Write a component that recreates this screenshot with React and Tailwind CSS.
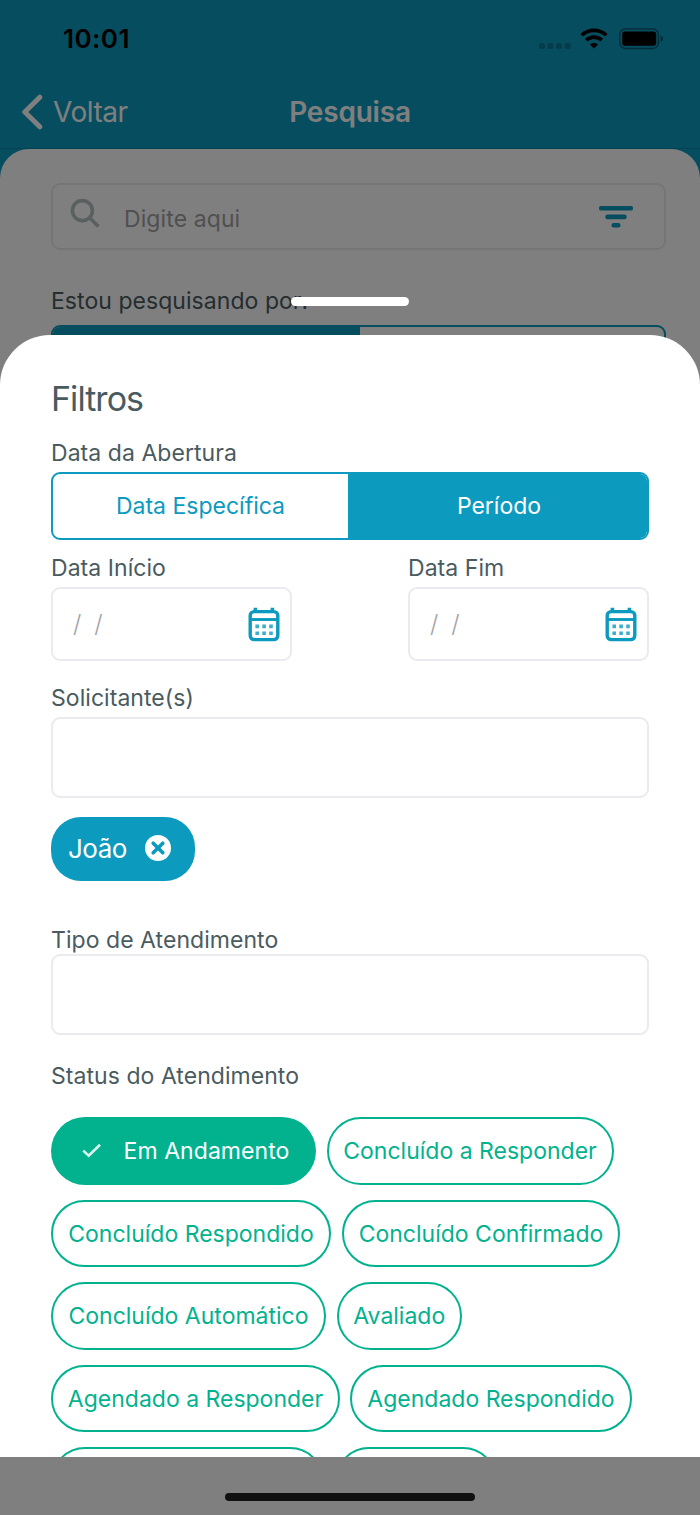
import React from "react";

const label = "text-[23px] leading-[30px] tracking-[0.05px] text-[#4a5b60]";

function StatusBar() {
  return (
    <div className="flex h-[76px] items-center justify-between pt-px pr-[36px] pl-[63px] text-black">
      <span className="text-[26px] leading-[30px] font-semibold tracking-[0.45px]">10:01</span>
      <div className="flex items-center">
        <svg className="mt-[14px] h-[6px] w-8" viewBox="0 0 32 6" fill="#000" fillOpacity="0.22">
          <rect x="0" width="6" height="6" rx="1.8" />
          <rect x="8.5" width="6" height="6" rx="1.8" />
          <rect x="17" width="6" height="6" rx="1.8" />
          <rect x="25.5" width="6" height="6" rx="1.8" />
        </svg>
        <svg className="ml-[9px] h-[21px] w-[28px]" viewBox="0 0 28 21">
          <g fill="none" stroke="#000" strokeWidth="3.7">
            <path d="M1.7 7.3A17.6 17.6 0 0 1 26.3 7.3" />
            <path d="M6.2 12.2A11.3 11.3 0 0 1 21.8 12.2" />
          </g>
          <path d="M14 20.6L9.9 16.6Q14 12.9 18.1 16.6Z" fill="#000" />
        </svg>
        <svg className="ml-[11px] h-[22px] w-[45px]" viewBox="0 0 45 22">
          <rect x="0.8" y="1" width="38.6" height="19.4" rx="5.5" fill="none" stroke="#000" strokeOpacity="0.4" strokeWidth="1.5" />
          <rect x="3.2" y="3.6" width="34" height="14.2" rx="2.8" fill="#000" />
          <path d="M41.6 7.4Q44 8.6 44 10.7T41.6 14Z" fill="#000" fillOpacity="0.5" />
        </svg>
      </div>
    </div>
  );
}

function NavBar() {
  return (
    <div className="grid h-[73px] grid-cols-3 items-center border-b border-[#0a86a8] text-[28px] text-white">
      <div className="flex items-center pl-[20px]">
        <svg className="h-[36px] w-[23px]" viewBox="0 0 23 36" fill="none" stroke="currentColor" strokeWidth="5" strokeLinecap="round" strokeLinejoin="round">
          <path d="M19.8 3.2L4.8 18L19.8 32.8" />
        </svg>
        <span className="ml-[10px] leading-[34px] tracking-[-0.5px]">Voltar</span>
      </div>
      <span className="text-center leading-[34px] font-semibold tracking-[-0.2px]">Pesquisa</span>
    </div>
  );
}

function SearchScreen() {
  return (
    <div className="flex h-full flex-col bg-[#0c9abf]">
      <StatusBar />
      <NavBar />
      <div className="flex-1 rounded-t-[29px] bg-white pt-[34px] pr-[34px] pl-[51px]">
        <div className="flex h-[67px] items-center rounded-[9px] border-2 border-[#ebebef] pr-[31px] pl-[17px]">
          <svg className="-mt-[5px] h-[32px] w-[32px]" viewBox="0 0 32 32" fill="none" stroke="#b4bfbe" strokeWidth="3.6">
            <circle cx="12.4" cy="12.6" r="10" />
            <path d="M19.4 19.6L28.4 28.6" />
          </svg>
          <span className="mt-[5px] ml-[22px] flex-1 text-[23px] leading-[30px] tracking-[0.1px] text-[#a0a0a3]">Digite aqui</span>
          <svg className="h-[22px] w-[34px]" viewBox="0 0 34 22" fill="#0c9abf">
            <rect x="0" y="0" width="34" height="4.6" rx="1.8" />
            <rect x="6.4" y="8.6" width="21.2" height="4.6" rx="1.8" />
            <rect x="12.6" y="17" width="8.8" height="4.6" rx="1.8" />
          </svg>
        </div>
        <p className={`mt-[36px] ${label}`}>Estou pesquisando por:</p>
        <div className="mt-[9px] flex h-[67px] overflow-hidden rounded-[9px] border-2 border-[#0c9abf]">
          <div className="w-[307px] bg-[#0c9abf]" />
        </div>
      </div>
    </div>
  );
}

function CalendarIcon() {
  return (
    <svg className="mt-[2px] h-[36px] w-[32px]" viewBox="0 0 32 36" fill="none" stroke="#0c9abf">
      <rect x="2.2" y="4.6" width="27.6" height="28" rx="4" strokeWidth="3.4" />
      <path d="M2 12.5H30" strokeWidth="2.9" />
      <path d="M7.4 0.8V5M24.4 0.8V5" strokeWidth="3.6" />
      <path d="M7.4 19.4H24.8M7.4 26.2H24.8" strokeWidth="3.6" strokeDasharray="3.6 3.3" strokeOpacity="0.8" />
    </svg>
  );
}

function DateField({ title }) {
  return (
    <div className="w-[241px]">
      <p className={label}>{title}</p>
      <div className="mt-[4px] flex h-[74px] items-center justify-between rounded-[9px] border-2 border-[#eaeaf0] pr-[10px] pl-[20px]">
        <span className="flex gap-[13px] text-[24px] leading-[30px] font-light text-[#a3a3a6]">
          <span>/</span>
          <span>/</span>
        </span>
        <CalendarIcon />
      </div>
    </div>
  );
}

function Chip({ width, children }) {
  return (
    <div className={`flex h-[67.5px] shrink-0 items-center justify-center rounded-full border-2 border-[#02b28e] text-[23px] leading-[30px] whitespace-nowrap text-[#02b28e] ${width}`}>
      {children}
    </div>
  );
}

function FilterSheet() {
  return (
    <div className="absolute inset-x-0 top-[335px] h-[1122px] overflow-hidden rounded-t-[50px] bg-white px-[51px] pt-[44px]">
      <h2 className="text-[34px] leading-[40px] tracking-[-0.95px] text-[#4a5b60]">Filtros</h2>
      <p className={`mt-[19px] ${label}`}>Data da Abertura</p>
      <div className="mt-[4px] flex h-[68px] overflow-hidden rounded-[9px] border-2 border-[#0c9abf] text-[23px] leading-[30px]">
        <div className="flex w-[295px] items-center justify-center pb-[1px] text-[#0c9abf]">Data Específica</div>
        <div className="flex flex-1 items-center justify-center bg-[#0c9abf] pb-[1px] pl-[3px] text-white">Período</div>
      </div>
      <div className="mt-[13px] flex justify-between">
        <DateField title="Data Início" />
        <DateField title="Data Fim" />
      </div>
      <p className={`mt-[22px] ${label}`}>Solicitante(s)</p>
      <div className="mt-[4px] h-[81px] rounded-[9px] border-2 border-[#eaeaf0]" />
      <div className="mt-[19px] flex h-[64px] w-[144px] items-center rounded-[30px] bg-[#0c9abf] pl-[17px] text-white">
        <span className="text-[26px] leading-[32px] tracking-[-0.5px]">João</span>
        <svg className="-mt-[2px] ml-[18px] h-[26px] w-[26px]" viewBox="0 0 26 26">
          <circle cx="13" cy="13" r="13" fill="#fff" />
          <path d="M8.2 8.2L17.8 17.8M17.8 8.2L8.2 17.8" stroke="#0c9abf" strokeWidth="3.6" strokeLinecap="round" />
        </svg>
      </div>
      <p className={`mt-[44px] ${label}`}>Tipo de Atendimento</p>
      <div className="-mt-[1px] h-[81px] rounded-[9px] border-2 border-[#eaeaf0]" />
      <p className={`mt-[26px] ${label}`}>Status do Atendimento</p>
      <div className="mt-[26.4px] flex flex-col gap-[15px]">
        <div className="flex gap-[10.5px]">
          <div className="flex h-[67.5px] w-[265px] items-center rounded-full bg-[#02b28e] pl-[30px] text-[23px] leading-[30px] text-white">
            <svg className="h-[16px] w-[21px]" viewBox="0 0 21 16" fill="none" stroke="#dcf5ef" strokeWidth="2.6">
              <path d="M2.3 7.6L7.7 12.6L19 1.8" />
            </svg>
            <span className="ml-[21.6px] tracking-[0.05px]">Em Andamento</span>
          </div>
          <Chip width="w-[287px]">Concluído a Responder</Chip>
        </div>
        <div className="flex gap-[11px]">
          <Chip width="w-[280px]">Concluído Respondido</Chip>
          <Chip width="w-[278px]">Concluído Confirmado</Chip>
        </div>
        <div className="flex gap-[11px]">
          <Chip width="w-[275px]">Concluído Automático</Chip>
          <Chip width="w-[124.5px]">Avaliado</Chip>
        </div>
        <div className="flex gap-[10px]">
          <Chip width="w-[289px]">Agendado a Responder</Chip>
          <Chip width="w-[282px]">Agendado Respondido</Chip>
        </div>
        <div className="flex gap-[11px]">
          <Chip width="w-[273px]" />
          <Chip width="w-[162px]" />
        </div>
      </div>
    </div>
  );
}

export default function App() {
  return (
    <div className="relative h-[1515px] w-[700px] overflow-hidden font-['Inter',sans-serif]">
      <SearchScreen />
      <div className="absolute inset-0 bg-black/50" />
      <div className="absolute top-[297px] left-[291px] h-[9px] w-[118px] rounded-full bg-white" />
      <FilterSheet />
      <div className="absolute bottom-[14px] left-[225px] h-[8px] w-[250px] rounded-full bg-[#111111]" />
    </div>
  );
}
